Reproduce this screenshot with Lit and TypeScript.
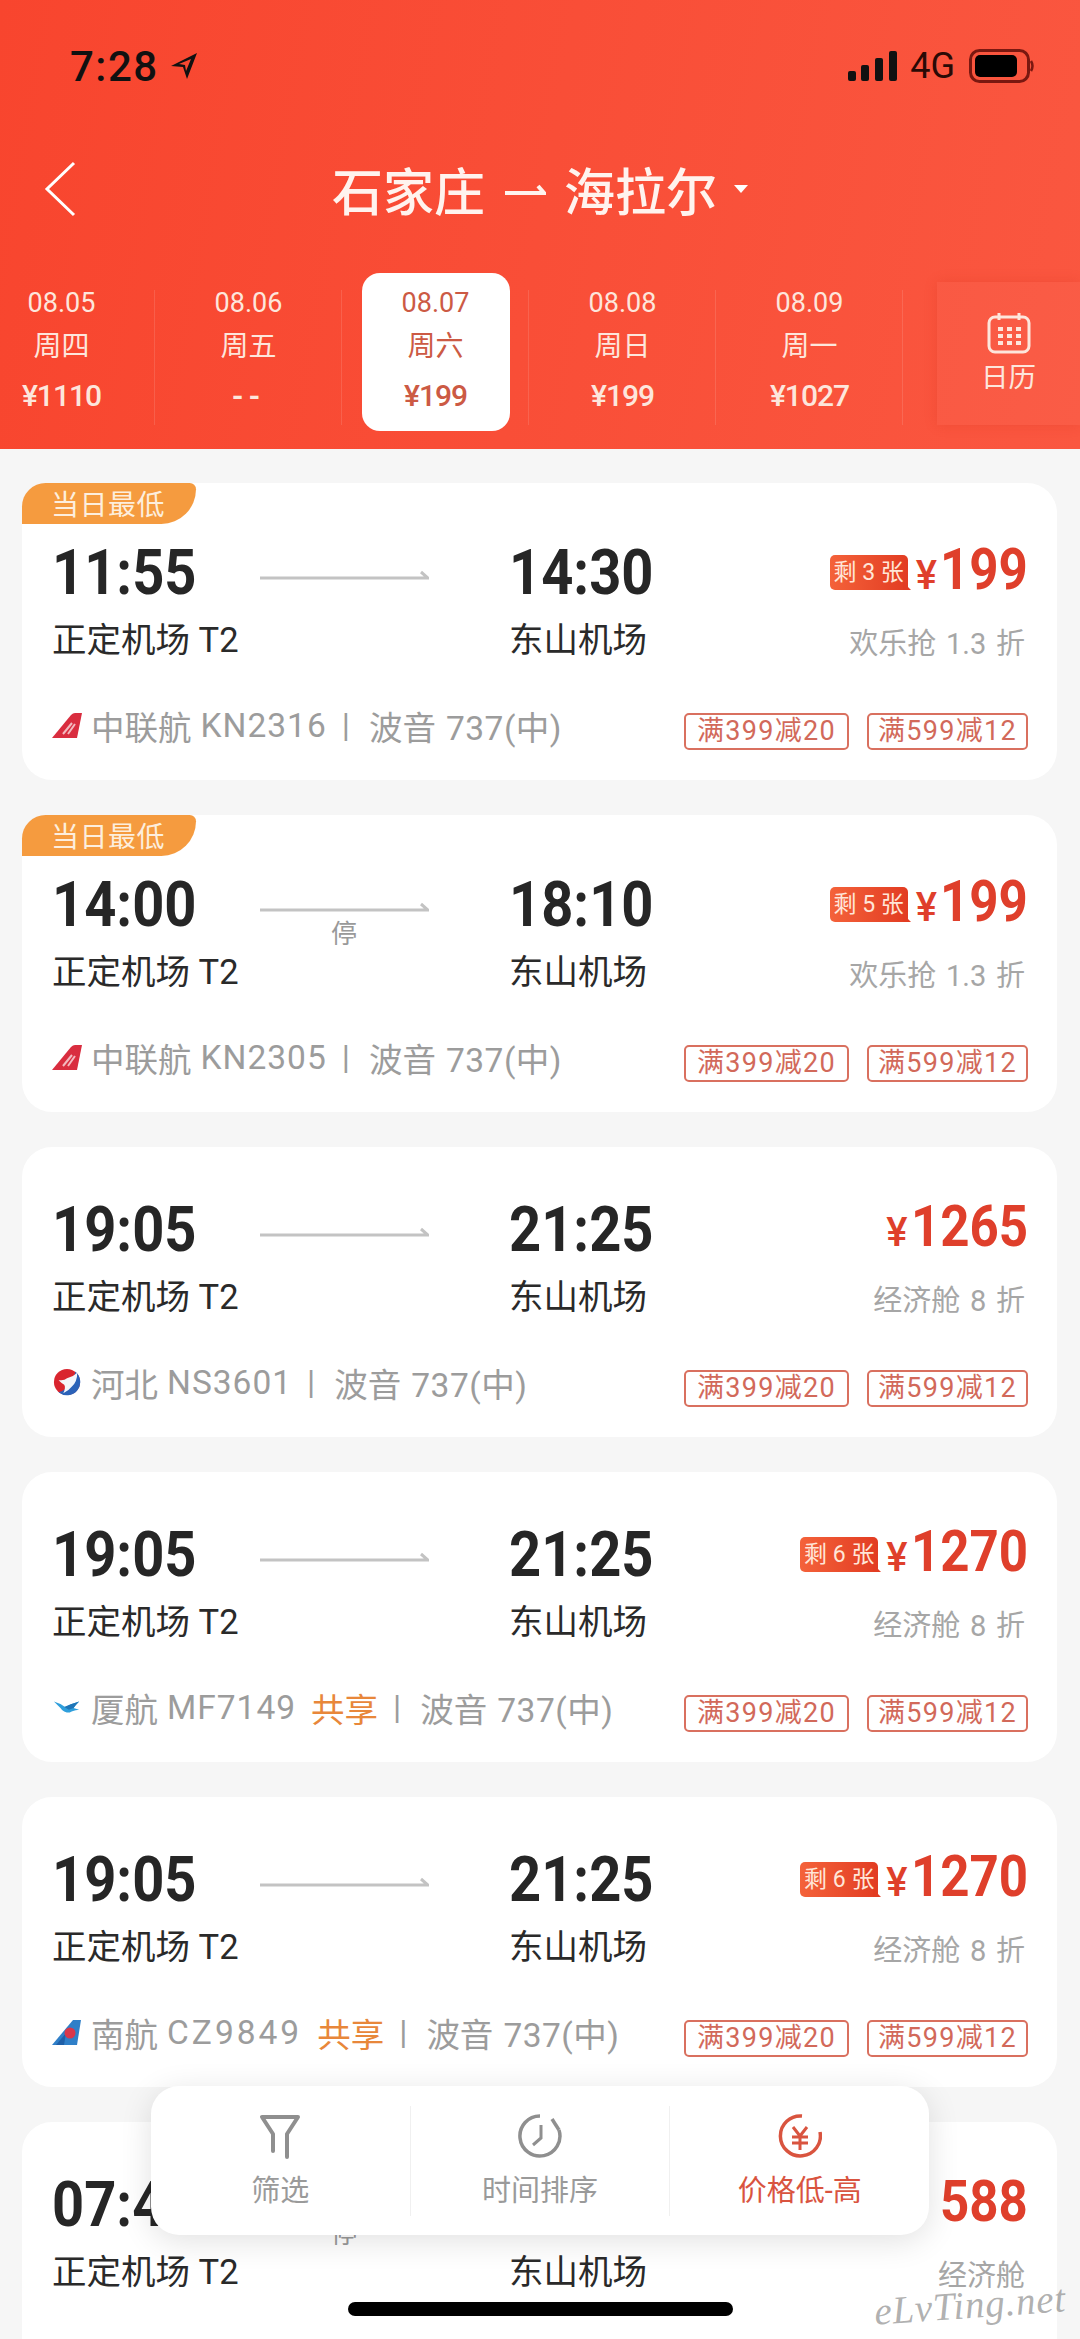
import { LitElement, html, css, svg } from "lit";
import { customElement } from "lit/decorators.js";
import { classMap } from "lit/directives/class-map.js";

type Flight = {
  dep: string; arr: string; tagged?: boolean; stop?: boolean; badge?: string; price: string;
  sub: string; logo?: string; air?: string; code?: string; shared?: boolean; wide?: boolean; spaced?: boolean;
};

const flights: Flight[] = [
  { dep: "11:55", arr: "14:30", tagged: true, badge: "3", price: "199", sub: "欢乐抢 1.3 折", logo: "kn", air: "中联航", code: "KN2316" },
  { dep: "14:00", arr: "18:10", tagged: true, stop: true, badge: "5", price: "199", sub: "欢乐抢 1.3 折", logo: "kn", air: "中联航", code: "KN2305" },
  { dep: "19:05", arr: "21:25", price: "1265", sub: "经济舱 8 折", logo: "ns", air: "河北", code: "NS3601" },
  { dep: "19:05", arr: "21:25", badge: "6", price: "1270", sub: "经济舱 8 折", logo: "mf", air: "厦航", code: "MF7149", shared: true },
  { dep: "19:05", arr: "21:25", badge: "6", price: "1270", sub: "经济舱 8 折", logo: "cz", air: "南航", code: "CZ9849", shared: true, spaced: true },
  { dep: "07:40", arr: "", stop: true, price: "588", sub: "经济舱", wide: true },
];

const dates = [
  { d: "08.05", w: "周四", p: "¥1110" },
  { d: "08.06", w: "周五", p: "--" },
  { d: "08.07", w: "周六", p: "¥199", on: true },
  { d: "08.08", w: "周日", p: "¥199" },
  { d: "08.09", w: "周一", p: "¥1027" },
];

function logo(kind?: string) {
  if (kind === "kn")
    return html`<svg class="logo" viewBox="0 0 30 28"><path d="M0 27 L19 4 Q21 2 23 2 H30 L25 27 Z" fill="#d92d3f"/><path d="M11 23 L20 12 M16 23 L23 13" stroke="#f3b9bf" stroke-width="2"/></svg>`;
  if (kind === "ns")
    return html`<svg class="logo" viewBox="0 0 30 30"><circle cx="15" cy="15" r="14" fill="#d9252f"/><path d="M6 26 Q20 22 24 4 A14 14 0 0 1 6 26Z" fill="#2b62b8"/><path d="M6 13 Q12 14 15 11 Q22 9 26 5 Q26 15 20 20 Q17 24 11 27 Q14 21 12 18 Q9 16 6 13Z" fill="#f4f6fb"/></svg>`;
  if (kind === "mf")
    return html`<svg class="logo" viewBox="0 0 30 30"><path d="M1 9 Q8 11 13 15 Q18 12 28 9 Q24 13 22 16 L28 18 Q20 19 18 21 Q11 21 8 16 Q5 13 1 9Z" fill="#2f9fdc"/><path d="M12 15 Q18 12 28 9 Q24 13 22 16 L17 18Z" fill="#1f76b8"/></svg>`;
  return html`<svg class="logo" viewBox="0 0 30 28"><path d="M0 27 L21 2 H29 L25 27 Z" fill="#2f7fc8"/><path d="M4 27 L14 15 L12 27Z" fill="#1f5fa8"/><circle cx="18" cy="15" r="5.5" fill="#d9364a"/></svg>`;
}

const chevron = svg`<path d="M30 2 L3 28 L30 54" fill="none" stroke="#fff" stroke-width="3"/>`;

@customElement("flight-card")
class FlightCard extends LitElement {
  static properties = { f: { attribute: false } };
  f!: Flight;
  static styles = css`
    :host { display: block; font-family: Roboto, "Noto Sans CJK SC", sans-serif; }
    .card { position: relative; background: #fff; border-radius: 30px; height: 290px; padding: 53px 32px 0 30px; box-sizing: border-box; }
    .card.tagged { height: 297px; padding-top: 60px; }
    .tag { position: absolute; left: 0; top: 0; width: 174px; height: 41px; background: #f59b3f; color: #fdeedd; font-size: 28px; letter-spacing: .5px; line-height: 41px; padding-left: 29px; box-sizing: border-box; border-radius: 30px 8px 44px 0; font-family: "Noto Sans CJK SC", sans-serif; }
    .top { display: flex; height: 117px; }
    .leg { display: flex; flex-direction: column; }
    .dep { width: 207px; }
    .arr { margin-left: 80px; }
    .time { font-size: 63px; line-height: 60px; height: 60px; font-weight: 700; color: #262626; transform: scaleX(.89); transform-origin: left center; white-space: nowrap; width: 160px; }
    .port { margin-top: 17px; font-size: 34.5px; line-height: 40px; color: #2a2a2a; white-space: nowrap; }
    .route { position: relative; width: 170px; height: 60px; }
    .route svg { position: absolute; left: 0; top: 26px; width: 170px; height: 12px; }
    .stop { position: absolute; left: 0; right: 0; top: 41px; text-align: center; font-size: 26px; line-height: 36px; color: #999; }
    .fare { margin-left: auto; display: flex; flex-direction: column; align-items: flex-end; }
    .priceline { display: flex; align-items: center; height: 60px; margin-top: -1px; margin-right: -3px; gap: 8px; }
    .badge { position: relative; height: 35px; line-height: 35px; width: 78px; text-align: center; box-sizing: border-box; background: linear-gradient(90deg, #f4623a, #e23c22); color: #ffe6d8; border-radius: 5px 5px 0 5px; font-size: 23px; white-space: nowrap; }
    .badge::after { content: ""; position: absolute; right: -3px; bottom: 0; border-left: 8px solid #e23c22; border-top: 8px solid transparent; }
    .price { color: #df3f2b; font-weight: 700; display: flex; align-items: baseline; font-size: 58px; line-height: 60px; }
    .price span { display: inline-block; transform: scaleX(.88); transform-origin: right center; }
    .price i { font-style: normal; font-size: 40px; font-weight: 500; margin-right: 3px; }
    .price.wide i { margin-right: 12px; }
    .sub { margin-top: 22px; font-size: 29px; line-height: 40px; color: #a6a6a6; white-space: nowrap; word-spacing: 2.5px; }
    .bottom { display: flex; align-items: center; height: 44px; margin-top: 43px; color: #9c9c9c; font-size: 33.5px; white-space: nowrap; }
    .logo { width: 30px; height: 28px; margin-right: 9px; flex: none; }
    .code { margin-left: 9px; letter-spacing: 1px; }
    .code.spaced { letter-spacing: 3px; }
    .shared { margin-left: 15px; color: #e8873a; }
    .sep { margin: 0 19px 0 15px; }
    .model { margin-left: 10px; letter-spacing: .5px; }
    .coupons { margin-left: auto; display: flex; gap: 18px; margin-right: -3px; margin-top: 13px; }
    .coupon { flex: none; width: 165px; text-align: center; height: 37px; line-height: 33px; box-sizing: border-box; border: 2px solid #d9705f; border-radius: 5px; font-size: 27px; letter-spacing: 1.3px; color: #d2695a; }
    .coupon + .coupon { width: 161px; }
  `;
  render() {
    const f = this.f;
    // The digits are condensed by a transform, so their unused layout width is pulled back.
    const pull = -(f.price.length * 58 * 0.562 * 0.12);
    return html`<div class=${classMap({ card: true, tagged: !!f.tagged })}>
      ${f.tagged ? html`<div class="tag">当日最低</div>` : ""}
      <div class="top">
        <div class="leg dep"><div class="time">${f.dep}</div><div class="port">正定机场 T2</div></div>
        <div class="route">
          <svg viewBox="0 0 170 12"><path d="M1 9 H169 L162 3" fill="none" stroke="#c3c3c3" stroke-width="3"/></svg>
          ${f.stop ? html`<div class="stop">停</div>` : ""}
        </div>
        <div class="leg arr"><div class="time">${f.arr}</div><div class="port">东山机场</div></div>
        <div class="fare">
          <div class="priceline">
            ${f.badge ? html`<div class="badge">剩 ${f.badge} 张</div>` : ""}
            <div class=${classMap({ price: true, wide: !!f.wide })}><i>¥</i><span style="margin-left:${pull}px">${f.price}</span></div>
          </div>
          <div class="sub">${f.sub}</div>
        </div>
      </div>
      ${f.air ? html`<div class="bottom">
        ${logo(f.logo)}<span>${f.air}</span><span class=${classMap({ code: true, spaced: !!f.spaced })}>${f.code}</span>
        ${f.shared ? html`<span class="shared">共享</span>` : ""}
        <span class="sep">|</span><span>波音</span><span class="model">737(中)</span>
        <div class="coupons"><span class="coupon">满399减20</span><span class="coupon">满599减12</span></div>
      </div>` : ""}
    </div>`;
  }
}

@customElement("app-root")
class AppRoot extends LitElement {
  static styles = css`
    :host { display: block; width: 1080px; height: 2339px; font-family: Roboto, "Noto Sans CJK SC", sans-serif; }
    .page { position: relative; width: 1080px; height: 2339px; overflow: hidden; background: #f6f6f6; }
    .head { position: relative; height: 449px; box-sizing: border-box; padding-top: 46px; background: linear-gradient(100deg, #f8452e, #fa5740); color: #fff; }
    .status { display: flex; align-items: center; height: 40px; padding: 0 45px 0 70px; color: #111; }
    .clock { font-size: 42px; font-weight: 500; letter-spacing: 1.5px; }
    .loc { width: 30px; height: 30px; margin-left: 10px; }
    .signal { margin-left: auto; width: 50px; height: 30px; }
    .net { margin-left: 12px; font-size: 36px; font-weight: 400; color: #2a0a06; }
    .batt { width: 66px; height: 34px; margin-left: 14px; }
    .nav { display: grid; grid-template-columns: 1fr auto 1fr; align-items: center; height: 100px; margin-top: 53px; }
    .back { width: 32px; height: 56px; margin-left: 44px; display: block; }
    .title { display: flex; align-items: center; font-size: 51px; font-weight: 500; color: #fff3ee; white-space: nowrap; }
    .t-arrow { width: 41px; height: 14px; margin: 0 18px 0 20px; }
    .caret { margin-left: 17px; border-left: 7px solid transparent; border-right: 7px solid transparent; border-top: 8px solid #fff; }
    .dates { display: flex; margin-top: 34px; margin-left: -32px; height: 158px; }
    .date { position: relative; width: 187px; display: flex; justify-content: center; }
    .date::after { content: ""; position: absolute; right: 0; top: 17px; bottom: 6px; width: 1px; background: rgba(255,255,255,.12); }
    .inner { width: 148px; height: 158px; border-radius: 18px; display: flex; flex-direction: column; align-items: center; color: #fde6dc; box-sizing: border-box; padding-top: 12px; }
    .date.on .inner { background: #fff; color: #cc5a44; }
    .d { font-size: 27px; line-height: 36px; }
    .w { font-size: 28px; line-height: 44px; margin-top: 4px; }
    .p { font-size: 30px; line-height: 36px; margin-top: 9px; font-weight: 500; letter-spacing: -1px; }
    .p.none { letter-spacing: 5px; font-weight: 700; }
    .cal { position: absolute; right: 0; top: 282px; width: 143px; height: 143px; background: rgba(255,255,255,.03); display: flex; flex-direction: column; align-items: center; box-shadow: 0 0 12px rgba(200,40,20,.2); color: #fde6dc; }
    .cal svg { width: 44px; height: 42px; margin-top: 30px; }
    .cal span { font-size: 27.5px; line-height: 36px; margin-top: 6px; }
    .list { display: flex; flex-direction: column; gap: 35px; padding: 34px 23px 0 22px; }
    .bar { position: absolute; left: 151px; top: 2086px; width: 778px; height: 149px; background: #fff; border-radius: 28px; box-shadow: 0 6px 32px rgba(0,0,0,.12); display: flex; align-items: center; }
    .tab { position: relative; flex: 1; height: 110px; display: flex; flex-direction: column; align-items: center; color: #9a9a9a; font-size: 29px; }
    .tab + .tab { border-left: 1px solid #f0f0f0; }
    .tab svg { width: 44px; height: 46px; margin-top: 7px; }
    .tab span { line-height: 40px; margin-top: 12px; }
    .tab.on { color: #d9543f; }
    .home { position: absolute; left: 348px; top: 2302px; width: 385px; height: 14px; border-radius: 7px; background: #000; }
    .mark { position: absolute; left: 874px; top: 2282px; font: italic 39px "Liberation Serif", serif; color: rgba(110,110,110,.55); letter-spacing: .8px; transform: rotate(-4deg); }
  `;
  render() {
    return html`<div class="page">
      <header class="head">
        <div class="status">
          <span class="clock">7:28</span>
          <svg class="loc" viewBox="0 0 30 30"><path d="M28 2 L2 15 L14 16 L18 28 Z M22 8 L17 20 L16 14 L10 13 Z" fill="#111" fill-rule="evenodd"/></svg>
          <svg class="signal" viewBox="0 0 50 30"><g fill="#111"><rect x="0" y="20" width="8" height="10" rx="2"/><rect x="13" y="14" width="8" height="16" rx="2"/><rect x="27" y="7" width="8" height="23" rx="2"/><rect x="41" y="0" width="8" height="30" rx="2"/></g></svg>
          <span class="net">4G</span>
          <svg class="batt" viewBox="0 0 66 34"><rect x="1.5" y="1.5" width="58" height="31" rx="9" fill="none" stroke="#7a1810" stroke-width="3"/><rect x="6" y="6" width="42" height="22" rx="5" fill="#000"/><path d="M62 12 Q65 17 62 22" fill="none" stroke="#7a1810" stroke-width="2.5"/></svg>
        </div>
        <div class="nav">
          <svg class="back" viewBox="0 0 32 56">${chevron}</svg>
          <div class="title"><span>石家庄</span>
            <svg class="t-arrow" viewBox="0 0 41 14"><path d="M0 11 H39 L33 4" fill="none" stroke="#fff3ee" stroke-width="4"/></svg>
            <span>海拉尔</span><i class="caret"></i></div>
          <div></div>
        </div>
        <div class="dates">
          ${dates.map((x) => html`<div class=${classMap({ date: true, on: !!x.on })}><div class="inner"><div class="d">${x.d}</div><div class="w">${x.w}</div><div class=${classMap({ p: true, none: x.p === "--" })}>${x.p}</div></div></div>`)}
        </div>
        <div class="cal">
          <svg viewBox="0 0 44 42"><rect x="2" y="5" width="40" height="35" rx="6" fill="none" stroke="#fde6dc" stroke-width="3"/><path d="M12 1V8M32 1V8" stroke="#fde6dc" stroke-width="3"/><g fill="#fde6dc"><rect x="11" y="15" width="5" height="4"/><rect x="20" y="15" width="5" height="4"/><rect x="29" y="15" width="5" height="4"/><rect x="11" y="22" width="5" height="4"/><rect x="20" y="22" width="5" height="4"/><rect x="29" y="22" width="5" height="4"/><rect x="11" y="29" width="5" height="4"/><rect x="20" y="29" width="5" height="4"/><rect x="29" y="29" width="5" height="4"/></g></svg>
          <span>日历</span>
        </div>
      </header>
      <div class="list">
        ${flights.map((f) => html`<flight-card .f=${f}></flight-card>`)}
      </div>
      <div class="bar">
        <div class="tab">
          <svg viewBox="0 0 44 46"><path d="M4 4H40L29 21V44M4 4L15 21V38" fill="none" stroke="#8f8f8f" stroke-width="4" stroke-linejoin="round" stroke-linecap="round"/></svg>
          <span>筛选</span>
        </div>
        <div class="tab">
          <svg viewBox="0 0 44 46"><path d="M22 3A20 20 0 1 0 41 17" fill="none" stroke="#8f8f8f" stroke-width="3.5"/><path d="M23 12V25L15 32" fill="none" stroke="#8f8f8f" stroke-width="3"/><path d="M34 6L41 17" stroke="#8f8f8f" stroke-width="3.5"/></svg>
          <span>时间排序</span>
        </div>
        <div class="tab on">
          <svg viewBox="0 0 44 46"><path d="M24 3A20 20 0 1 0 42 19" fill="none" stroke="#d9543f" stroke-width="3.5"/><path d="M15 14L22 23L29 14M14 24H30M14 30H30M22 23V37" fill="none" stroke="#d9543f" stroke-width="3"/></svg>
          <span>价格低-高</span>
        </div>
      </div>
      <div class="home"></div>
      <div class="mark">eLvTing.net</div>
    </div>`;
  }
}
